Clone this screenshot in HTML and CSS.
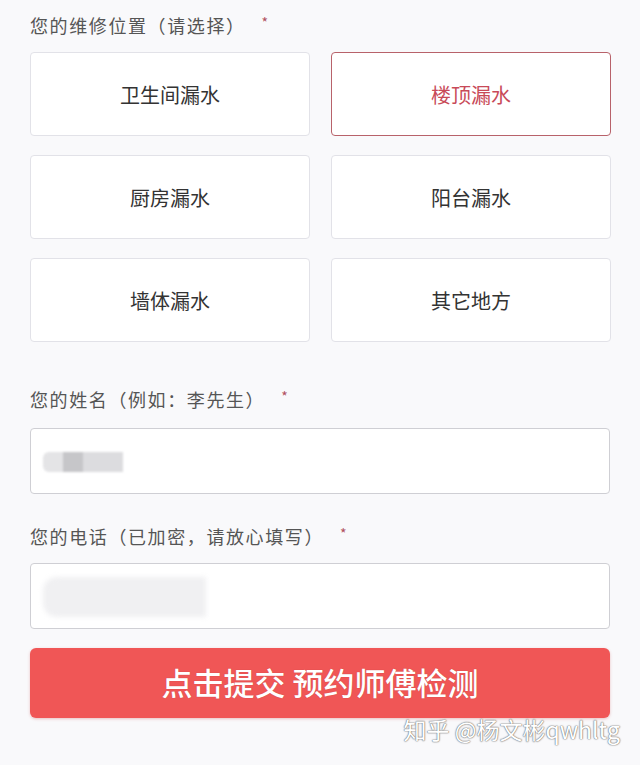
FILE: index.html
```html
<!DOCTYPE html>
<html lang="zh">
<head>
<meta charset="utf-8">
<link rel="stylesheet" href="styles.css">
</head>
<body>
<div class="page">
  <div class="label first">您的维修位置（请选择）<span class="star">*</span></div>
  <div class="grid">
    <div class="opt">卫生间漏水</div>
    <div class="opt selected">楼顶漏水</div>
    <div class="opt">厨房漏水</div>
    <div class="opt">阳台漏水</div>
    <div class="opt">墙体漏水</div>
    <div class="opt">其它地方</div>
  </div>
  <div class="label l2">您的姓名（例如：李先生）<span class="star">*</span></div>
  <div class="input">
    <div class="blur-name"><span class="b1"></span><span class="b2"></span><span class="b3"></span></div>
  </div>
  <div class="label l3">您的电话（已加密，请放心填写）<span class="star">*</span></div>
  <div class="input">
    <div class="blur-phone"></div>
  </div>
  <div class="submit">点击提交 预约师傅检测</div>
  <div class="watermark">知乎 @杨文彬qwhltg</div>
</div>
</body>
</html>
```
FILE: styles.css
```css
html, body {
  margin: 0;
  padding: 0;
  background: #f9f9fb;
}
body {
  font-family: "Noto Sans CJK SC", "Noto Sans", sans-serif;
  color: #333;
}
.page {
  position: relative;
  width: 580px;
  height: 765px;
  padding: 0 30px;
  box-sizing: content-box;
}
.label {
  font-size: 18px;
  letter-spacing: 1.6px;
  line-height: 26px;
  color: #555;
  display: flex;
  align-items: flex-start;
}
.label.first {
  padding-top: 12px;
  margin-bottom: 14px;
}
.label.l2 {
  margin-top: 44px;
  margin-bottom: 16px;
}
.label.l3 {
  margin-top: 29px;
  margin-bottom: 14px;
}
.star {
  color: #b05060;
  font-size: 14px;
  margin-left: 16px;
  line-height: 20px;
}
.grid {
  display: grid;
  grid-template-columns: 280px 280px;
  column-gap: 21px;
  row-gap: 19px;
}
.opt {
  height: 84px;
  box-sizing: border-box;
  border: 1px solid #e2e2e8;
  border-radius: 4px;
  background: #fff;
  display: flex;
  align-items: center;
  justify-content: center;
  font-size: 20px;
  color: #333;
}
.opt.selected {
  border-color: #b8626a;
  color: #c84a58;
}
.input {
  height: 66px;
  box-sizing: border-box;
  border: 1px solid #cfcfd4;
  border-radius: 4px;
  background: #fff;
  display: flex;
  align-items: center;
  padding-left: 12px;
}
.blur-name {
  display: flex;
  height: 20px;
  margin-top: 2px;
  filter: blur(1px);
}
.blur-name span { display: block; height: 20px; }
.blur-name .b1 { width: 20px; background: #e4e4e6; border-radius: 6px 0 0 6px; }
.blur-name .b2 { width: 20px; background: #c6c6c9; }
.blur-name .b3 { width: 40px; background: #dcdcdf; }
.blur-phone {
  width: 163px;
  height: 40px;
  margin-top: 2px;
  background: #f0f0f2;
  border-radius: 14px 0 0 14px;
  filter: blur(2.5px);
}
.submit {
  margin-top: 19px;
  height: 70px;
  box-sizing: border-box;
  padding-bottom: 4px;
  border-radius: 6px;
  background: #f05656;
  color: #fff;
  font-size: 31px;
  font-weight: 500;
  display: flex;
  align-items: center;
  justify-content: center;
  box-shadow: 0 1px 3px rgba(200, 60, 60, 0.3);
  text-shadow: 0 0 1px rgba(120, 30, 30, 0.4);
}
.watermark {
  position: absolute;
  right: 20px;
  top: 714px;
  font-size: 23px;
  line-height: 30px;
  color: #fff;
  text-shadow: 0 0 1px #777, 0 0 1px #777, 0 0 2px #999;
}
```
